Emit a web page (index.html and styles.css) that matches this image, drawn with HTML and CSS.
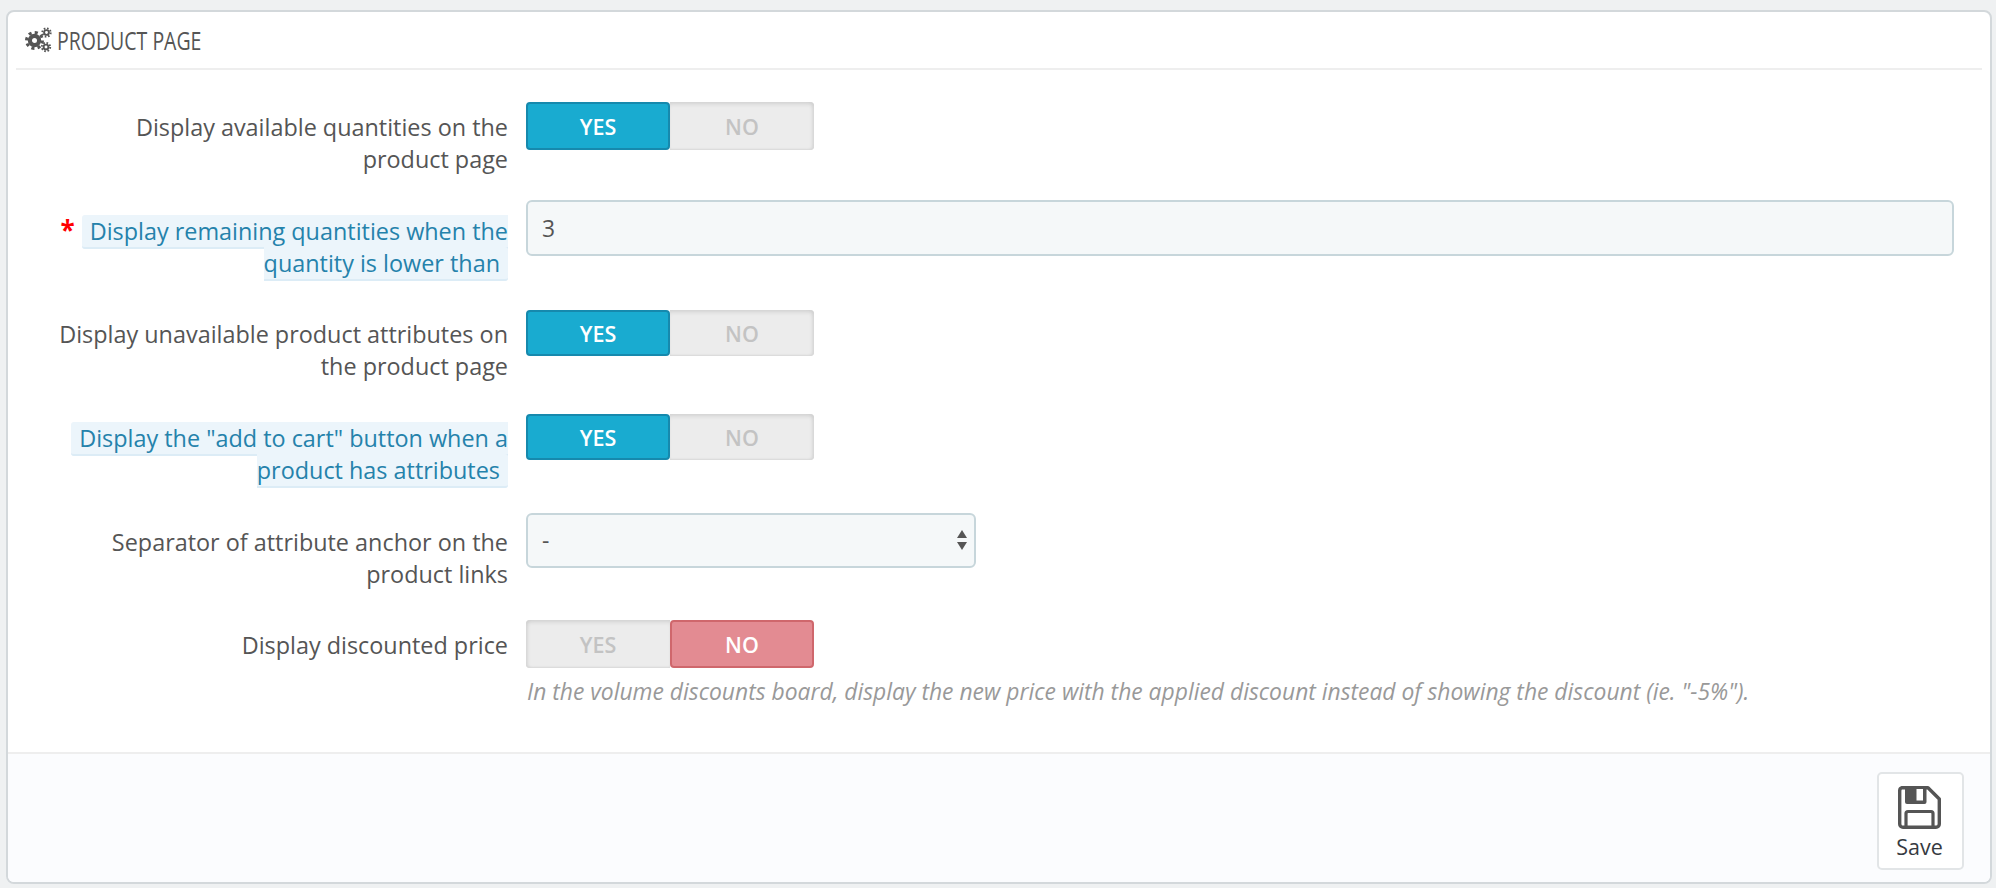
FILE: index.html
```html
<!DOCTYPE html>
<html lang="en">
<head>
<meta charset="utf-8">
<title>Product page</title>
<link rel="stylesheet" href="styles.css">
</head>
<body>
<section class="panel">
  <header class="panel-heading">
    <svg class="gears" viewBox="0 0 27 26" width="27" height="26" aria-hidden="true">
      <g fill="none" stroke="#555">
        <circle cx="9.5" cy="13.5" r="4.6" stroke-width="4.2"/>
        <circle cx="9.5" cy="13.5" r="8" stroke-width="3" stroke-dasharray="3.1 3.18"/>
        <circle cx="21.5" cy="5.5" r="2.4" stroke-width="1.9"/>
        <circle cx="21.5" cy="5.5" r="4.2" stroke-width="1.9" stroke-dasharray="1.6 1.7"/>
        <circle cx="21" cy="20" r="2.4" stroke-width="1.9"/>
        <circle cx="21" cy="20" r="4.2" stroke-width="1.9" stroke-dasharray="1.6 1.7"/>
      </g>
    </svg>
    <h1 class="panel-title">PRODUCT PAGE</h1>
  </header>

  <div class="form">
    <label class="label label-low">Display available quantities on the product page</label>
    <div class="switch">
      <span class="opt opt-yes">YES</span><span class="opt opt-off">NO</span>
    </div>

    <label class="label label-input"><span class="req">*</span><span class="hint-label">Display remaining quantities when the quantity is lower than</span></label>
    <input class="field field-wide" type="text" value="3">

    <label class="label label-toggle">Display unavailable product attributes on the product page</label>
    <div class="switch switch-sm">
      <span class="opt opt-yes">YES</span><span class="opt opt-off">NO</span>
    </div>

    <label class="label label-toggle"><span class="hint-label">Display the "add to cart" button when a product has attributes</span></label>
    <div class="switch switch-sm">
      <span class="opt opt-yes">YES</span><span class="opt opt-off">NO</span>
    </div>

    <label class="label label-select">Separator of attribute anchor on the product links</label>
    <div class="select-wrap">
      <select class="field field-select"><option>-</option></select>
    </div>

    <label class="label label-low">Display discounted price</label>
    <div class="control-stack">
      <div class="switch">
        <span class="opt opt-off opt-off-left">YES</span><span class="opt opt-no">NO</span>
      </div>
      <p class="help">In the volume discounts board, display the new price with the applied discount instead of showing the discount (ie. "-5%").</p>
    </div>
  </div>

  <footer class="panel-footer">
    <button class="save" type="button">
      <svg viewBox="0 0 43 43" width="43" height="43" aria-hidden="true">
        <path d="M4 1.700H30L41.300 13V38a3.300 3.300 0 0 1-3.300 3.300H5A3.300 3.300 0 0 1 1.700 38V5A3.300 3.300 0 0 1 4 1.700Z" fill="none" stroke="#555" stroke-width="3.400" stroke-linejoin="round"/>
        <path d="M7 3H28.500V16a2 2 0 0 1-2 2H9a2 2 0 0 1-2-2Z" fill="#555"/>
        <rect x="18.500" y="3" width="6.500" height="11.500" fill="#fff"/>
        <path d="M8 41V27.500a2 2 0 0 1 2-2H33a2 2 0 0 1 2 2V41" fill="none" stroke="#555" stroke-width="3.200"/>
      </svg>
      <span class="save-text">Save</span>
    </button>
  </footer>
</section>
</body>
</html>
```

FILE: styles.css
```css
* { box-sizing: border-box; }

html, body {
  margin: 0;
  height: 888px;
  overflow: hidden;
}

body {
  background: #eff1f2;
  padding: 10px 4px 4px 6px;
  font-family: "Open Sans", sans-serif;
  font-size: 23.400px;
  color: #555;
}

.panel {
  height: 874px;
  background: #fff;
  border: 2px solid #d3d8db;
  border-radius: 8px;
  display: flex;
  flex-direction: column;
  overflow: hidden;
}

.panel-heading {
  height: 58px;
  flex: none;
  margin: 0 8px;
  padding: 0 10px 0 9px;
  display: flex;
  align-items: center;
  gap: 5px;
  border-bottom: 2px solid #eeeeee;
}

.panel-title {
  margin: 0;
  font-family: "Open Sans", sans-serif;
  font-size: 26px;
  font-weight: 500;
  color: #555;
  transform: scaleX(0.75);
  transform-origin: left center;
  white-space: nowrap;
}

.form {
  flex: 1;
  padding: 32px 36px 0 0;
  display: grid;
  grid-template-columns: 500px 1fr;
  grid-template-rows: 98px 110px 104px 99px 107px auto;
  column-gap: 18px;
}

.label {
  display: block;
  text-align: right;
  line-height: 32px;
  color: #555;
  padding-left: 48px;
}

.label-low { padding-top: 9px; }
.label-toggle { padding-top: 8px; }
.label-input { padding-top: 15px; }
.label-select { padding-top: 13px; }

.req {
  color: #f00;
  font-size: 26px;
  font-weight: 700;
  margin-right: 7px;
  line-height: 20px;
}

.hint-label {
  color: #2582ab;
  background: #ecf5fb;
  border-bottom: 2px solid #dcecf6;
  border-radius: 3px;
  padding: 0 8px;
}

.switch {
  display: flex;
  width: 288px;
  height: 48px;
}

.switch-sm { height: 46px; }

.opt {
  flex: 0 0 50%;
  display: flex;
  align-items: center;
  justify-content: center;
  font-size: 21.500px;
  font-weight: 600;
  border-radius: 4px;
}

.opt-yes {
  color: #fff;
  background: #19abd0;
  border: 2px solid #1689ad;
}

.opt-no {
  color: #fff;
  background: #e38b92;
  border: 2px solid #cf676c;
}

.opt-off {
  color: #c3c3c3;
  background: #ececec;
  border-radius: 0 4px 4px 0;
  box-shadow: inset 0 4px 4px -2px #d0d0d0, inset -3px 0 3px -1px #d8d8d8, inset 0 -2px 2px -1px #d8d8d8;
}

.opt-off-left {
  border-radius: 4px 0 0 4px;
  box-shadow: inset 0 4px 4px -2px #d0d0d0, inset 3px 0 3px -1px #d8d8d8, inset 0 -2px 2px -1px #d8d8d8;
}

.field {
  font-family: "Open Sans", sans-serif;
  font-size: 22.800px;
  color: #555;
  background: #f5f8f9;
  border: 2px solid #c7d6db;
  border-radius: 6px;
  outline: none;
}

.field-wide {
  width: 1428px;
  height: 56px;
  padding: 0 14px;
}

.select-wrap {
  position: relative;
  width: 450px;
  height: 55px;
}

.select-wrap::before,
.select-wrap::after {
  content: "";
  position: absolute;
  right: 9px;
  border-left: 5px solid transparent;
  border-right: 5px solid transparent;
}

.select-wrap::before {
  top: 17px;
  border-bottom: 8px solid #555;
}

.select-wrap::after {
  top: 29px;
  border-top: 8px solid #555;
}

.field-select {
  width: 100%;
  height: 100%;
  padding: 0 14px;
  appearance: none;
  -webkit-appearance: none;
}

.control-stack {
  display: flex;
  flex-direction: column;
}

.help {
  margin: 8px 0 0 1px;
  font-size: 22.850px;
  font-style: italic;
  line-height: 32px;
  color: #999;
  white-space: nowrap;
}

.panel-footer {
  height: 130px;
  flex: none;
  background: #fbfcfe;
  border-top: 2px solid #eeeeee;
  padding: 18px 26px 0 0;
  display: flex;
  justify-content: flex-end;
  align-items: flex-start;
}

.save {
  width: 87px;
  height: 98px;
  background: #fff;
  border: 2px solid #e2e5e7;
  border-radius: 5px;
  padding: 12px 2px 0 0;
  display: flex;
  flex-direction: column;
  align-items: center;
  font-family: "Open Sans", sans-serif;
}

.save-text {
  margin-top: 3px;
  font-size: 21.500px;
  line-height: 30px;
  color: #363a41;
}
```
